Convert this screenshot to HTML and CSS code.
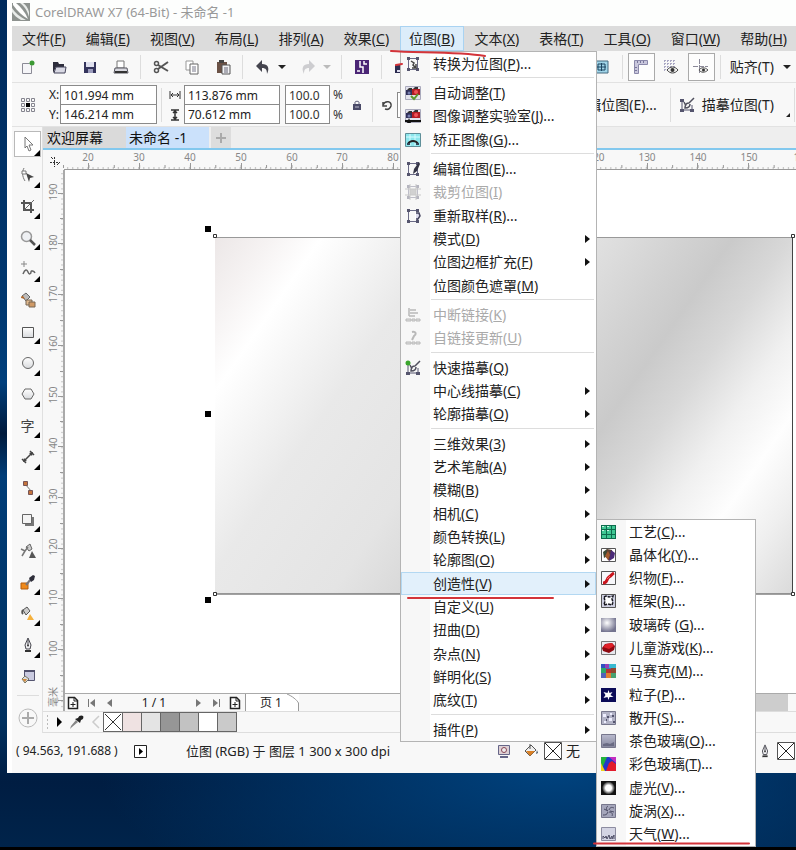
FILE: index.html
```html
<!DOCTYPE html>
<html lang="zh-CN">
<head>
<meta charset="utf-8">
<title>CorelDRAW X7 (64-Bit) - 未命名 -1</title>
<link rel="stylesheet" href="styles.css">
</head>
<body>
<svg class="defs" width="0" height="0" aria-hidden="true">
  <defs>
    <symbol id="nodes" viewBox="0 0 16 16"><path d="M4 2.500h8M4 13.500h8M3.500 4v8M12.500 4v8" stroke="#6a6a86" stroke-width="1" fill="none"/><path d="M2 1h3v3H2zM11 1h3v3h-3zM2 12h3v3H2zM11 12h3v3h-3z" fill="#55556e"/></symbol>
    <symbol id="trace" viewBox="0 0 16 16"><path d="M3 4v9M13 8v5M4 13h8" stroke="#55556e" fill="none"/><path d="M1 2h4v3H1zM1 12h4v3H1zM11 12h4v3h-4z" fill="#55556e"/><path d="M15 1l-5 5M10 6c-3 0-4 2-4 5 3 0 5-1 5-4M5 5l2 4" stroke="#50505e" stroke-width="1.500" fill="none"/></symbol>
    <symbol id="cross" viewBox="0 0 18 18"><path d="M.5.5h17v17H.5z" fill="#fff" stroke="#555"/><path d="M1 1l16 16M17 1L1 17" stroke="#222"/></symbol>
    <symbol id="pen" viewBox="0 0 16 16"><path d="M8 1L5 8l1 4h4l1-4z" fill="#f2f2f5" stroke="#44444c"/><path d="M8 3v5" stroke="#44444c"/><circle cx="8" cy="8.500" r="1" fill="#333"/><path d="M5 13h6v2H5z" fill="#333"/></symbol>
    <symbol id="newpage" viewBox="0 0 12 14"><path d="M1.500 1.500h6l3 3v8h-9z" fill="#fff" stroke="#222" stroke-width="1.500"/><path d="M7 1v4h4M6 6v5M3.500 8.500h5" stroke="#222" fill="none"/></symbol>
    <symbol id="camera" viewBox="0 0 16 16"><path d="M.5 1.500h15v13H.5z" fill="#e2e2ec" stroke="#aaaabc"/><path d="M1 5h6v5H1z" fill="#30305a"/><path d="M7 4h8v6H7z" fill="#b01c24"/><path d="M2 5l2-2h3v2zM8 4l2-2h3v2z" fill="#333"/><circle cx="4" cy="8" r="1.500" fill="#7880b0"/><circle cx="11" cy="7" r="2" fill="#f05058"/></symbol>
    <linearGradient id="lav" x1="0" y1="0" x2="0" y2="1"><stop offset="0" stop-color="#b9bace"/><stop offset="1" stop-color="#85869c"/></linearGradient>
    <radialGradient id="ball" cx=".4" cy=".35" r=".65"><stop offset="0" stop-color="#fff"/><stop offset="1" stop-color="#74748f"/></radialGradient>
    <radialGradient id="vig"><stop offset=".45" stop-color="#fff"/><stop offset="1" stop-color="#111"/></radialGradient>
    <linearGradient id="soft" x1="0" y1="0" x2="0" y2="1"><stop offset="0" stop-color="#fff"/><stop offset="1" stop-color="#d8dadd"/></linearGradient>
  </defs>
</svg>

<main class="window">
  <header class="titlebar">
    <svg width="18" height="18" viewBox="0 0 18 18"><path d="M0 0h18v18H0z" fill="#8d928f"/><path d="M1 0h3c5 4 9 9 12 16C11 13 5 8 1 2z" fill="#fff"/><path d="M0 5c3 5 8 9 14 12H9C5 15 2 12 0 9zM8 0c4 3 7 7 9 14V9C16 5 14 2 11 0z" fill="#e9ecea"/></svg>
    <h1>CorelDRAW X7 (64-Bit) - 未命名 -1</h1>
  </header>

  <nav class="menubar">
    <button>文件(<u>F</u>)</button>
    <button>编辑(<u>E</u>)</button>
    <button>视图(<u>V</u>)</button>
    <button>布局(<u>L</u>)</button>
    <button>排列(<u>A</u>)</button>
    <button>效果(<u>C</u>)</button>
    <div class="menu-host">
      <button class="open">位图(<u>B</u>)</button>
      <div class="menu">
        <button><i><svg><use href="#nodes"/><path d="M6 5l3 2-1 2 3 3M11 8v4H7" stroke="#444" stroke-width="1.500" fill="none"/></svg></i>转换为位图(<u>P</u>)...</button>
        <hr>
        <button><i><svg><use href="#camera"/><path d="M6 11l3 3 4-5" stroke="#5c9a2c" stroke-width="2" fill="none"/></svg></i>自动调整(<u>T</u>)</button>
        <button><i><svg><use href="#camera"/><path d="M0 13h16" stroke="#111" stroke-width="2"/><path d="M4 10l2 5H2z" fill="#111"/></svg></i>图像调整实验室(<u>J</u>)...</button>
        <button><i><svg><path d="M.5 1.500h15v13H.5z" fill="#8be6ec" stroke="#5f8f99"/><path d="M1 5h14M5 2v12M10 2v12" stroke="#d5fbff"/><path d="M3 12c2-4 8-4 10 0" stroke="#222" stroke-width="2" fill="none"/><path d="M2 11h3v2H2zM11 11h3v2h-3z" fill="#345"/></svg></i>矫正图像(<u>G</u>)...</button>
        <hr>
        <button><i><svg><use href="#nodes"/><path d="M14 1L9 8l-1 5 4-3 3-7z" fill="#333344"/></svg></i>编辑位图(<u>E</u>)...</button>
        <button disabled><i><svg opacity=".4"><path d="M5 5h6v6H5z" fill="#999"/><use href="#nodes"/><path d="M0 5h16M0 11h16M5 0v16M11 0v16" stroke="#888"/></svg></i>裁剪位图(<u>I</u>)</button>
        <button><i><svg><use href="#nodes"/><path d="M10 4h4v7h-4z" fill="#fff"/><path d="M11 5h3l1 3-2 3h-2" fill="#dde" stroke="#44445e" stroke-width="1.500"/></svg></i>重新取样(<u>R</u>)...</button>
        <button class="more"><i></i>模式(<u>D</u>)</button>
        <button class="more"><i></i>位图边框扩充(<u>F</u>)</button>
        <button><i></i>位图颜色遮罩(<u>M</u>)</button>
        <hr>
        <button disabled><i><svg opacity=".55"><path d="M4 1v8M5 3h6M5 6h8M4 9h6" stroke="#888" stroke-width="1.500"/><path d="M1 12h5v2H1zM7 12h3v2H7zM11 12h4v2h-4z" fill="#ccc" stroke="#888"/></svg></i>中断链接(<u>K</u>)</button>
        <button disabled><i><svg opacity=".55"><path d="M7 2c5-1 4 3 2 4l-2 4" stroke="#888" stroke-width="2" fill="none"/><path d="M1 12h5v2H1zM7 12h3v2H7zM11 12h4v2h-4z" fill="#ccc" stroke="#888"/></svg></i>自链接更新(<u>U</u>)</button>
        <hr>
        <button><i><svg><use href="#trace"/><circle cx="3" cy="3" r="2.500" fill="#3aa52c"/></svg></i>快速描摹(<u>Q</u>)</button>
        <button class="more"><i></i>中心线描摹(<u>C</u>)</button>
        <button class="more"><i></i>轮廓描摹(<u>O</u>)</button>
        <hr>
        <button class="more"><i></i>三维效果(<u>3</u>)</button>
        <button class="more"><i></i>艺术笔触(<u>A</u>)</button>
        <button class="more"><i></i>模糊(<u>B</u>)</button>
        <button class="more"><i></i>相机(<u>C</u>)</button>
        <button class="more"><i></i>颜色转换(<u>L</u>)</button>
        <button class="more"><i></i>轮廓图(<u>O</u>)</button>
        <div class="sub-host">
          <button class="more current"><i></i>创造性(<u>V</u>)</button>
          <div class="menu submenu">
            <button><i><svg><path d="M0 1h15v14H0z" fill="#0d6b4d"/><path d="M1 2h4v3H1zM6 2h4v3H6zM11 2h3v3h-3zM1 6h4v4H1zM6 6h4v4H6zM11 6h3v4h-3zM1 11h4v3H1zM6 11h4v3H6zM11 11h3v3h-3z" fill="#3fc793"/><path d="M1 2h2v1H1zM6 2h2v1H6zM1 6h2v1H1zM6 6h2v1H6z" fill="#c9f5e2"/></svg></i>工艺(<u>C</u>)...</button>
            <button><i><svg><path d="M.5 1.500h14v13H.5z" fill="#fff" stroke="#555"/><path d="M2 5l4-3 2 6-5 3z" fill="#3b4a35"/><path d="M6 2l5 1 1 5-4 6-3-4z" fill="#5c4030"/><path d="M10 3l4 3-1 5-5 3z" fill="#4a2a78"/><path d="M4 9l3-5 2 4-2 5z" fill="#a35a2e"/></svg></i>晶体化(<u>Y</u>)...</button>
            <button><i><svg><path d="M.5 1.500h14v13H.5z" fill="#f7f7fa" stroke="#555"/><path d="M2 13c5 0 3-4 6-6s3-3 5-4" stroke="#c9151d" stroke-width="3" fill="none"/><path d="M6 9l3-3" stroke="#ff6a6a"/></svg></i>织物(<u>F</u>)...</button>
            <button><i><svg><path d="M.5 1.500h14v13H.5z" fill="#cfd0e2" stroke="#555"/><path d="M4 4h7v8H4z" fill="#fff"/><path d="M3 4l2-1 3 1 4-1-1 3 1 3-1 3-4-1-4 1 1-4z" stroke="#181820" stroke-width="1.500" stroke-dasharray="3 1" fill="none"/></svg></i>框架(<u>R</u>)...</button>
            <button><i><svg><path d="M0 1h15v14H0z" fill="url(#ball)"/></svg></i>玻璃砖 (<u>G</u>)...</button>
            <button><i><svg><path d="M.5 1.500h14v13H.5z" fill="#e8e8ee" stroke="#777"/><path d="M1 8l3-4 7-1 3 3-1 4-5 3-6-2z" fill="#8e0910"/><path d="M2 7l3-3 6-1 2 3-5 3z" fill="#e02028"/></svg></i>儿童游戏(<u>K</u>)...</button>
            <button><i><svg><path d="M0 1h15v14H0z" fill="#5262b8"/><path d="M0 1h4v4H0z" fill="#3050c0"/><path d="M4 1h4v4H4z" fill="#9240b8"/><path d="M8 1h7v4H8z" fill="#38b9d0"/><path d="M0 5h5v5H0z" fill="#2ca86a"/><path d="M5 6h5v4H5z" fill="#b73230"/><path d="M10 5h5v5h-5z" fill="#93452e"/><path d="M5 10h5v5H5z" fill="#e28030"/><path d="M10 10h5v5h-5z" fill="#48a070"/></svg></i>马赛克(<u>M</u>)...</button>
            <button><i><svg><path d="M0 1h15v14H0z" fill="#0b0b57"/><path d="M7.500 3l1 3 3-1-2 3 3 2-4 0-1 3-1-3-4 1 2-3-2-3 4 1z" fill="#fff"/></svg></i>粒子(<u>P</u>)...</button>
            <button><i><svg><path d="M.5 1.500h14v13H.5z" fill="#b2b3c6" stroke="#77778c"/><path d="M2 4h3v3H2zM8 8h3v3H8zM3 11h2v2H3zM9 3h2v2H9z" fill="#eef"/><path d="M6 6h2v2H6zM11 5h2v2h-2zM5 9h1v2H5zM12 11h2v2h-2z" fill="#555570"/></svg></i>散开(<u>S</u>)...</button>
            <button><i><svg><path d="M.5 1.500h14v13H.5z" fill="url(#lav)" stroke="#77778c"/><path d="M2 11l4-1 3 1 4-2v4H2z" fill="#696a82"/></svg></i>茶色玻璃(<u>O</u>)...</button>
            <button><i><svg><path d="M0 1h15v14H0z" fill="#2438c8"/><path d="M0 1h6l-3 7-3 7z" fill="#23b33c"/><path d="M0 7l4 8H0z" fill="#f2d21a"/><path d="M8 1h7v6z" fill="#c32cc0"/><path d="M5 15l3-8 3-2 4 3v7z" fill="#e21b2c"/></svg></i>彩色玻璃(<u>T</u>)...</button>
            <button><i><svg><path d="M0 1h15v14H0z" fill="#111"/><circle cx="7.500" cy="8" r="6.500" fill="url(#vig)"/></svg></i>虚光(<u>V</u>)...</button>
            <button><i><svg><path d="M.5 1.500h14v13H.5z" fill="#a5a6bb" stroke="#77778c"/><path d="M7 8C5 7 5 4 7 3M8 7c1-3 3-3 5-2M8 9c3 0 4 2 3 4M7 9c-1 3-3 3-5 3M7 8L3 6M9 8l4 1" stroke="#4c4c64" fill="none"/></svg></i>旋涡(<u>X</u>)...</button>
            <button><i><svg><path d="M.5 1.500h14v13H.5z" fill="#d3d4e3" stroke="#8c8ca0"/><path d="M2 13v-3l2 2 1-2 1 3 2-4 1 4 2-3v3l2-4v4" stroke="#4c4c64" fill="none"/></svg></i>天气(<u>W</u>)...</button>
          </div>
        </div>
        <button class="more"><i></i>自定义(<u>U</u>)</button>
        <button class="more"><i></i>扭曲(<u>D</u>)</button>
        <button class="more"><i></i>杂点(<u>N</u>)</button>
        <button class="more"><i></i>鲜明化(<u>S</u>)</button>
        <button class="more"><i></i>底纹(<u>T</u>)</button>
        <hr>
        <button class="more"><i></i>插件(<u>P</u>)</button>
      </div>
    </div>
    <button>文本(<u>X</u>)</button>
    <button>表格(<u>T</u>)</button>
    <button>工具(<u>O</u>)</button>
    <button>窗口(<u>W</u>)</button>
    <button>帮助(<u>H</u>)</button>
  </nav>

  <section class="toolbar" aria-label="标准工具栏">
    <button class="tb" aria-label="新建"><svg><path d="M2.500 4.500h7l2 2v8h-9z" fill="#f5f5f8" stroke="#8b8b96"/><circle cx="12" cy="4" r="2.500" fill="#3c9a34"/></svg></button>
    <button class="tb" aria-label="打开"><svg><path d="M2 3h5l1 2h5v3H5l-3 6z" fill="#2e2e3c"/><path d="M5 8h10l-1 6H3z" fill="#d9d9e4" stroke="#44445a"/></svg></button>
    <button class="tb" aria-label="保存"><svg><path d="M2 3h12v11H2z" fill="#34345c"/><path d="M4 3h8v5H4z" fill="#dfe0ee"/><path d="M6 10h5v4H6z" fill="#9c9dbd"/></svg></button>
    <button class="tb" aria-label="打印"><svg><path d="M4 2h7v7H4z" fill="#fff" stroke="#777"/><path d="M2 9h12l1 5H1z" fill="#d8d8df" stroke="#55555f"/><path d="M2 13h12" stroke="#333" stroke-width="2"/></svg></button>
    <span class="split"></span>
    <button class="tb" aria-label="剪切"><svg><path d="M5 6l10 6M5 10l10-7" stroke="#555" stroke-width="2"/><circle cx="3.500" cy="4.500" r="2" fill="none" stroke="#555" stroke-width="1.500"/><circle cx="3.500" cy="11.500" r="2" fill="none" stroke="#555" stroke-width="1.500"/></svg></button>
    <button class="tb" aria-label="复制"><svg><path d="M2 2h7v9H2z" fill="#fff" stroke="#999"/><path d="M6 5h8v10H6z" fill="#fff" stroke="#666"/><path d="M8 8h4M8 10h4M8 12h4" stroke="#778"/></svg></button>
    <button class="tb" aria-label="粘贴"><svg><path d="M2 3h10v11H2z" fill="#6b5246"/><path d="M4 1h5v3H4z" fill="#444"/><path d="M7 6h8v9H7z" fill="#f2f2f5" stroke="#555"/><path d="M9 9h4M9 11h4M9 13h4" stroke="#667"/></svg></button>
    <span class="split"></span>
    <button class="tb" aria-label="撤消"><svg><path d="M1 7l6-6v4c6 0 8 4 5 10 0-4-1-6-5-6v4z" fill="#44444e"/></svg></button>
    <span class="drop"></span>
    <button class="tb" aria-label="重做" disabled><svg><path d="M15 7L9 1v4C3 5 1 9 4 15c0-4 1-6 5-6v4z" fill="#cdcdd0"/></svg></button>
    <span class="drop pale"></span>
    <span class="split"></span>
    <button class="tb" aria-label="搜索内容"><svg><path d="M1 1h14v14H1z" fill="#4b2676"/><path d="M6 2v6h3v6M10 2v3h3M6 12H3" stroke="#fff" stroke-width="1.500" fill="none"/></svg></button>
    <span class="split"></span>
    <button class="tb import" aria-label="导入"><svg><path d="M1 6h10v8H1z" fill="#2c2c50"/><path d="M3 11h7v2H3z" fill="#dde"/></svg></button>
    <span class="grow"></span>
    <button class="tb" aria-label="全屏预览"><svg><path d="M1 2h13v12H1z" fill="#9fd4e8" stroke="#456a80"/><path d="M4 5h7v6H4zM3 8h9M7.500 4v8" stroke="#1d4560" fill="none"/></svg></button>
    <span class="split"></span>
    <button class="tb framed" aria-label="显示标尺"><svg><path d="M1.500 1.500h13v4h-9v9h-4z" fill="#c9c7dd" stroke="#8a88aa"/><path d="M4.500 2v2M7.500 2v2M10.500 2v2M2 8.500h2M2 11.500h2" stroke="#777599"/></svg></button>
    <button class="tb" aria-label="显示网格"><svg><path d="M1 1.500h12M1 4.500h12M1 7.500h12M1 10.500h4M1.500 1v12M4.500 1v12M7.500 1v7M10.500 1v7" stroke="#aaa8c4" stroke-dasharray="2 1" fill="none"/><path d="M4 11c3-4 8-4 11 0-3 4-8 4-11 0z" fill="#eee" stroke="#444"/><circle cx="9.500" cy="11" r="2" fill="#333"/></svg></button>
    <button class="tb framed" aria-label="显示辅助线"><svg><path d="M0 7.500h15M6.500 0v14" stroke="#8a8898" stroke-dasharray="5 1"/><path d="M6 11c2-3 6-3 9 0-3 3-7 3-9 0z" fill="#eee" stroke="#555"/><circle cx="10.500" cy="11" r="1.500" fill="#333"/></svg></button>
    <span class="split"></span>
    <button class="snap">贴齐(T)<span class="drop"></span></button>
  </section>

  <section class="props" aria-label="属性栏">
    <svg class="origin" width="16" height="16"><path d="M1.500 1.500h3v3h-3zM6.500 1.500h3v3h-3zM11.500 1.500h3v3h-3zM1.500 6.500h3v3h-3zM11.500 6.500h3v3h-3zM1.500 11.500h3v3h-3zM6.500 11.500h3v3h-3zM11.500 11.500h3v3h-3z" fill="none" stroke="#85858f"/><path d="M6 6h4v4H6z"/></svg>
    <div class="fields position">
      <label for="px">X:</label><input id="px" value="101.994 mm">
      <label for="py">Y:</label><input id="py" value="146.214 mm">
    </div>
    <span class="split"></span>
    <div class="fields size">
      <label for="pw" aria-label="宽度"><svg width="12" height="10"><path d="M1 1v8M11 1v8M2 5h8M4 3L2 5l2 2M8 3l2 2-2 2" stroke="#333" fill="none"/></svg></label><input id="pw" value="113.876 mm">
      <label for="ph" aria-label="高度"><svg width="10" height="12"><path d="M1 1h8M1 11h8M5 2v8M3 4l2-2 2 2M3 8l2 2 2-2" stroke="#333" fill="none" stroke-width="1.500"/></svg></label><input id="ph" value="70.612 mm">
    </div>
    <div class="fields percent">
      <input id="sx" value="100.0"><label for="sx">%</label>
      <input id="sy" value="100.0"><label for="sy">%</label>
    </div>
    <svg class="lock" width="10" height="12"><path d="M3 6V3c0-1 4-1 4 0v3" fill="none" stroke="#666680"/><path d="M1 5h8v6H1z" fill="#4a4a68"/><path d="M3 8h4" stroke="#bbc"/></svg>
    <span class="split"></span>
    <div class="fields angle">
      <label for="rot" aria-label="旋转角度"><svg width="12" height="12"><path d="M2 3v4h4M2 6c2-5 9-4 8 1-1 3-3 4-6 3" fill="none" stroke="#444" stroke-width="1.500"/></svg></label>
      <input id="rot" value=".0">
    </div>
    <span class="grow"></span>
    <button class="prop-btn">编辑位图(E)...</button>
    <span class="split"></span>
    <button class="prop-btn"><svg width="16" height="16"><use href="#trace"/></svg>描摹位图(T)</button>
    <span class="corner"></span>
    <span class="split"></span>
  </section>

  <div class="workspace">
    <aside class="toolbox" aria-label="工具箱">
      <button class="tool fly picked" aria-label="选择"><svg><path d="M5 1l8 8-4 0 2 5-2 1-2-5-2 2z" fill="#fff" stroke="#777"/></svg></button>
      <button class="tool fly" aria-label="形状"><svg><path d="M4 1c-2 4-2 8 1 13" stroke="#777" fill="none"/><path d="M2 4h4v3H2z" fill="#fff" stroke="#777"/><path d="M6 6l8 4-4 1-1 4z" fill="#444"/></svg></button>
      <button class="tool fly" aria-label="裁剪"><svg><path d="M4 2v10h10M1 5h10v10" stroke="#555" stroke-width="2" fill="none"/><path d="M4 12L14 2" stroke="#666"/></svg></button>
      <button class="tool fly" aria-label="缩放"><svg><circle cx="6.500" cy="6.500" r="5" fill="#eef0f3" stroke="#999" stroke-width="1.500"/><path d="M10 10l5 5" stroke="#555" stroke-width="2.500"/></svg></button>
      <button class="tool fly" aria-label="手绘"><svg><path d="M4 0v6M1 3h6" stroke="#888"/><path d="M3 13c2-5 4-5 5-2s3 2 3 0 3-1 4 1" stroke="#666" fill="none" stroke-width="1.500"/></svg></button>
      <button class="tool" aria-label="智能填充"><svg><path d="M2 4l4-3 4 4-4 4z" fill="#bbb" stroke="#666"/><path d="M1 6c0-2 1-2 2-2l2 3z" fill="#b0682c"/><path d="M6 8h6v5H6z" fill="#e0b98e" stroke="#765"/><path d="M9 10h6v5H9z" fill="#d09a66" stroke="#765"/></svg></button>
      <button class="tool fly" aria-label="矩形"><svg><path d="M2.500 3.500h11v10h-11z" fill="url(#soft)" stroke="#555"/></svg></button>
      <button class="tool fly" aria-label="椭圆形"><svg><circle cx="8" cy="8" r="5.500" fill="url(#soft)" stroke="#666"/></svg></button>
      <button class="tool fly" aria-label="多边形"><svg><path d="M5 3h6l3 5-3 5H5L2 8z" fill="url(#soft)" stroke="#666"/></svg></button>
      <button class="tool fly" aria-label="文本"><span class="glyph">字</span></button>
      <button class="tool fly" aria-label="平行度量"><svg><path d="M4 12l8-8M2 10l4 4M10 2l4 4" stroke="#444" stroke-width="1.500"/><path d="M3 13l1-4 3 3zM13 3L9 4l3 3z" fill="#444"/></svg></button>
      <button class="tool fly" aria-label="连接器"><svg><path d="M5 4l7 8" stroke="#777"/><path d="M3.500 1.500h4v4h-4zM8.500 10.500h4v4h-4z" fill="#c4733c" stroke="#755"/></svg></button>
      <button class="tool fly" aria-label="阴影"><svg><path d="M5 5h9v9H5z" fill="#777"/><path d="M2.500 2.500h9v9h-9z" fill="#f4f4f4" stroke="#666"/></svg></button>
      <button class="tool" aria-label="透明度"><svg><path d="M6 4l4-3 2 5-3 2z" fill="#ccc" stroke="#666"/><path d="M1 6l4 2 3-4M5 8l-3 5" stroke="#777" fill="none" stroke-width="1.500"/><path d="M12 8l4 7H9z" fill="#555"/></svg></button>
      <button class="tool fly" aria-label="颜色滴管"><svg><path d="M1 9h7v6H1z" fill="#f08a1c" stroke="#b05c10"/><path d="M6 11l5-6" stroke="#77777f" stroke-width="2"/><path d="M9 4l4-3 2 1-1 4-3 2z" fill="#2e2e3a"/></svg></button>
      <button class="tool fly" aria-label="交互式填充"><svg><path d="M3 4l4-3 3 4-4 4z" fill="#ccc" stroke="#555"/><path d="M3 4c-1 1-1 3 0 4" stroke="#555" stroke-width="2"/><path d="M10 8l4 6H7z" fill="#f5b13d"/></svg></button>
      <button class="tool fly" aria-label="轮廓笔"><svg><use href="#pen"/></svg></button>
      <button class="tool" aria-label="编辑填充"><svg><path d="M4.500 2.500h10v10h-10z" fill="#c9cae0" stroke="#555570"/><path d="M4 2h11v2H4z" fill="#50506c"/><path d="M2 11l3-3 4 3-4 4z" fill="#ddd" stroke="#776"/><path d="M2 11h5l-2 3z" fill="#d08a3c"/></svg></button>
      <button class="add-tool" aria-label="快速自定义"><svg width="20" height="20"><circle cx="10" cy="10" r="9" fill="none" stroke="#bbb"/><path d="M10 4v12M4 10h12" stroke="#aaa" stroke-width="2"/></svg></button>
    </aside>

    <div class="document">
      <div class="tabs">
        <button class="tab">欢迎屏幕</button>
        <button class="tab active">未命名 -1</button>
        <button class="tab plus" aria-label="新建文档"><svg width="12" height="12"><path d="M6 1v10M1 6h10" stroke="#aaa" stroke-width="2"/></svg></button>
      </div>
      <svg class="hruler">
        <g transform="translate(-43 -150)">
          <path d="M64 169.500h900" stroke="#999"/>
          <path d="M67 168h731" pathLength="144" stroke="#999" stroke-width="1" stroke-dasharray=".25 .75"/>
          <path d="M63 166.500h736" pathLength="29" stroke="#999" stroke-width="3" stroke-dasharray=".04 .96"/>
          <path d="M88.500 163v6M139.500 163v6M190.500 163v6M241.500 163v6M291.500 163v6M342.500 163v6M393.500 163v6M596.500 163v6M647.500 163v6M697.500 163v6M748.500 163v6" stroke="#999"/>
          <text x="88" y="161">20</text><text x="139" y="161">30</text><text x="190" y="161">40</text><text x="241" y="161">50</text><text x="292" y="161">60</text><text x="342" y="161">70</text><text x="393" y="161">80</text><text x="596" y="161">120</text><text x="647" y="161">130</text><text x="698" y="161">140</text><text x="749" y="161">150</text><text x="802" y="161">160</text>
          <path d="M54.500 157v10M50 162.500h10" stroke="#333" stroke-dasharray="2 1"/><path d="M57 165l3-3M51 157l2 2" stroke="#333"/>
        </g>
      </svg>
      <svg class="vruler">
        <g transform="translate(-43 -170)">
          <path d="M64 170v541" stroke="#aaa" stroke-width="2"/>
          <path d="M62 173v538" pathLength="106" stroke="#aaa" stroke-width="1" stroke-dasharray=".25 .75"/>
          <path d="M58 193.500h5M58 243.500h5M58 294.500h5M58 345.500h5M58 396.500h5M58 446.500h5M58 497.500h5M58 548.500h5M58 598.500h5M58 649.500h5M58 700.500h5M60 218.500h3M60 269.500h3M60 320.500h3M60 371.500h3M60 421.500h3M60 472.500h3M60 523.500h3M60 573.500h3M60 624.500h3M60 675.500h3" stroke="#999"/>
          <text transform="translate(57 192) rotate(-90)">190</text><text transform="translate(57 243) rotate(-90)">180</text><text transform="translate(57 294) rotate(-90)">170</text><text transform="translate(57 344) rotate(-90)">160</text><text transform="translate(57 395) rotate(-90)">150</text><text transform="translate(57 446) rotate(-90)">140</text><text transform="translate(57 497) rotate(-90)">130</text><text transform="translate(57 547) rotate(-90)">120</text><text transform="translate(57 598) rotate(-90)">110</text><text transform="translate(57 649) rotate(-90)">100</text><text transform="translate(57 697) rotate(-90)">毫米</text>
        </g>
      </svg>
      <svg class="canvas">
        <defs>
          <linearGradient id="metal" gradientUnits="userSpaceOnUse" x1="215" y1="237" x2="773" y2="622">
            <stop offset="0" stop-color="#ece7e7"/><stop offset=".07" stop-color="#f6f3f3"/><stop offset=".13" stop-color="#fff"/><stop offset=".19" stop-color="#f6f6f6"/><stop offset=".28" stop-color="#e9e9e9"/><stop offset=".44" stop-color="#e4e4e4"/><stop offset=".5" stop-color="#dcdcdc"/><stop offset=".57" stop-color="#d2d2d2"/><stop offset=".63" stop-color="#cacaca"/><stop offset=".7" stop-color="#d8d8d8"/><stop offset=".78" stop-color="#f0f0f0"/><stop offset=".85" stop-color="#fefefe"/><stop offset=".92" stop-color="#efefef"/><stop offset="1" stop-color="#dadada"/>
          </linearGradient>
        </defs>
        <g transform="translate(-65 -170)">
          <path d="M215 237h578v357H215z" fill="url(#metal)"/>
          <path d="M215 237.500h578" stroke="#999"/>
          <path d="M215 594h578M792.500 237v357" stroke="#444"/>
          <path d="M205 226h6v6h-6zM205 411h6v6h-6zM205 597h6v6h-6z"/>
          <path d="M213.500 234.500h3v3h-3zM213.500 592.500h3v3h-3zM791.500 234.500h3v3h-3zM791.500 592.500h3v3h-3z" fill="#fff" stroke="#333"/>
        </g>
      </svg>
      <div class="pages">
        <svg width="12" height="14"><use href="#newpage"/></svg>
        <svg width="10" height="10"><path d="M1 1v8h1V1zM8 1v8L3 5z" fill="#777"/></svg>
        <svg width="10" height="10"><path d="M7 1v8L2 5z" fill="#777"/></svg>
        <span class="count">1 / 1</span>
        <svg width="10" height="10"><path d="M3 1v8l5-4z" fill="#777"/></svg>
        <svg width="10" height="10"><path d="M2 1v8l5-4zM8 1v8h1V1z" fill="#777"/></svg>
        <svg width="12" height="14"><use href="#newpage"/></svg>
        <div class="page-tab">页 1<svg width="12" height="18"><path d="M0 0c5 2 10 6 11.500 9v9" fill="none" stroke="#999"/></svg></div>
        <span class="scroll"></span>
      </div>
      <div class="palette">
        <svg width="46" height="16"><path d="M4.500 1v14" stroke="#bbb" stroke-dasharray="2 2"/><path d="M14 3v10l5-5z"/><path d="M27 15l1-3 5-6 2 2-6 5z" fill="#888"/><path d="M32 5l3-1c1-3 4-3 5-2s0 4-2 4l-1 3z" fill="#222"/></svg>
        <svg width="14" height="14"><path d="M10 1L4 7l6 6" stroke="#ccc" stroke-width="1.500" fill="none"/></svg>
        <ul class="swatches">
          <li><svg width="18" height="18"><path d="M1 1l16 16M17 1L1 17" stroke="#333"/></svg></li><li class="s1"></li><li class="s2"></li><li class="s3"></li><li class="s4"></li><li></li><li class="s5"></li>
        </ul>
      </div>
    </div>
  </div>

  <footer class="status">
    <span class="coords">( 94.563, 191.688 )</span>
    <svg width="13" height="13"><path d="M.5.5h12v12H.5z" fill="#fff" stroke="#222"/><path d="M5 3v7l4-3.500z"/></svg>
    <span class="info">位图 (RGB) 于 图层 1 300 x 300 dpi</span>
    <svg class="proof" width="14" height="14"><path d="M1.500 1.500h11v9h-11z" fill="#ddd0d4" stroke="#668"/><circle cx="7" cy="6" r="2.500" fill="#eee" stroke="#845"/><path d="M3 13h8" stroke="#668" stroke-width="2"/></svg>
    <svg class="bucket" width="16" height="16"><path d="M2 8l6-6 5 5-6 6z" fill="#eee" stroke="#555"/><path d="M3 8h9l-5 5z" fill="#d98026"/><path d="M7 1v5" stroke="#555"/><path d="M14 7l1 3-2 1z" fill="#456"/></svg>
    <svg width="18" height="18"><use href="#cross"/></svg>
    <span class="none">无</span>
    <span class="grow"></span>
    <svg width="14" height="16"><use href="#pen"/></svg>
    <svg class="outline" width="18" height="18"><use href="#cross"/></svg>
  </footer>
</main>

<svg class="marks" aria-hidden="true"><path d="M391 51c25 2 66 0 94 5M396 65l6-1M408 598l145 0M594 843.500l155 0" fill="none" stroke="#d3343a" stroke-width="2" stroke-linecap="round"/></svg>
</body>
</html>
```
FILE: styles.css
```css
* { box-sizing: border-box; }

body {
  margin: 0;
  min-height: 100vh;
  position: relative;
  overflow: hidden;
  padding-left: 7px;
  border-bottom: 3px solid #000;
  background:
    radial-gradient(ellipse 460px 160px at 560px 770px, #00437f, transparent),
    linear-gradient(#002a5c 0, #00376f 35%, #003f7c 45%, #001a3c 51%, #003d78 56%, #00305f 85%, #001d42 92%, #00244b);
  font: 14px/20px "Noto Sans", "Noto Sans CJK SC", sans-serif;
  color: #222;
}

button, input { font: inherit; color: inherit; }
button { border: 0; padding: 0; background: none; white-space: nowrap; }
u { text-underline-offset: 1px; text-decoration-thickness: 1px; }
svg { flex: none; }
.defs { position: absolute; }
.grow { flex: 1; }

.window { background: #f8f8f8; border-left: 5px solid #fff; }

.titlebar {
  display: flex;
  align-items: center;
  gap: 5px;
  height: 26px;
  padding-bottom: 2px;
  background: #fdfefd;
}
.titlebar h1 { margin: 0; font-size: 13px; font-weight: 400; color: #999; }

/* menu bar */
.menubar { display: flex; height: 25px; background: #dcdcdc; }
.menubar > button, .menu-host > button { height: 25px; padding: 0 10px; flex: none; }
.menu-host { position: relative; }
.menu-host > .open { background: #dcedfa; border: 1px solid #a9d3f2; margin: 0 1px; padding: 0 8px; }

.menu {
  position: absolute;
  z-index: 5;
  top: 100%;
  left: 1px;
  width: 197px;
  min-height: 691px;
  display: flex;
  flex-direction: column;
  border: 1px solid #b4b4b4;
  background: linear-gradient(90deg, #f7f7f7 29px, #fff 29px);
}
.menu button {
  flex: 1;
  display: flex;
  align-items: center;
  width: 100%;
  padding: 0;
  text-align: left;
  position: relative;
}
.menu i { flex: none; width: 32px; height: 16px; padding-left: 4px; }
.menu i svg { display: block; width: 16px; height: 16px; }
.menu hr { flex: none; width: 163px; height: 1px; margin: 2px 2px 3px auto; border: 0; background: #ddd; }
.menu button:disabled { color: #aaa; }
.more::after {
  content: "";
  margin-left: auto;
  margin-right: 6px;
  border: 4px solid transparent;
  border-left: 5px solid #111;
  border-right: 0;
}
.sub-host { flex: 1; display: flex; position: relative; }
.menu .current { background: #e2f0fb; box-shadow: inset 0 0 0 1px #b3d8f2; }
.menu .submenu {
  top: -53px;
  left: 195px;
  width: 160px;
  min-height: 328px;
}

/* toolbars */
.toolbar {
  display: flex;
  align-items: center;
  height: 32px;
  border-bottom: 1px solid #e2e2e2;
}
.tb { width: 31px; height: 28px; flex: none; display: grid; place-items: center; }
.tb svg, .tool svg { width: 16px; height: 16px; }
.framed { width: 27px; margin: 0 1px; border: 1px solid #aaa; background: #fdfdfd; }
.split { flex: none; width: 1px; height: 24px; margin: 0 4px; background: #ddd; }
.drop { flex: none; width: 8px; border: 4px solid transparent; border-top: 4px solid #222; border-bottom: 0; }
.pale { border-top-color: #bbb; }
.tb + .drop { margin-right: 6px; }
.snap { display: flex; align-items: center; gap: 9px; padding: 0 5px; }

.props {
  display: flex;
  align-items: center;
  height: 44px;
  border-bottom: 1px solid #e2e2e2;
}
.props .split { height: 34px; }
.origin { margin: 0 12px 0 8px; }
.fields { display: grid; align-items: center; font-size: 12px; line-height: 18px; }
.fields input {
  width: 100%;
  height: 20px;
  padding: 0 3px;
  border: 1px solid #8a8a8a;
  background: #fff;
}
.fields input:nth-of-type(2) { height: 19px; border-top: 0; }
.fields label { display: grid; justify-items: center; }
.position { grid-template-columns: 12px 97px; }
.size { grid-template-columns: 18px 96px; margin-right: 5px; }
.percent { grid-template-columns: 45px 16px; color: #333; }
.lock { margin: 0 6px; }
.angle { grid-template-columns: 20px 60px; }
.angle input { height: 26px; }
.prop-btn { display: flex; align-items: center; gap: 7px; }
.prop-btn + .split { margin: 0 8px 0 13px; }
.corner { align-self: flex-end; margin: 0 4px 9px 12px; border: 2px solid #222; border-top-color: transparent; border-left-color: transparent; }
.props .corner + .split { margin: 0 1px 0 0; }

/* workspace */
.workspace { display: grid; grid-template-columns: 31px minmax(0, 1fr); }
.toolbox { display: flex; flex-direction: column; padding: 1px 0 0 1px; border-right: 1px solid #e0e0e0; }
.tool { flex: 1; display: grid; place-items: center; position: relative; width: 29px; }
.picked svg { position: relative; }
.picked::before {
  content: "";
  position: absolute;
  inset: 3px 1px 2px;
  border: 1px solid #b9b9b9;
  background: #fff;
}
.fly::after {
  content: "";
  position: absolute;
  right: 2px;
  bottom: 3px;
  border: 3px solid #000;
  border-top-color: transparent;
  border-left-color: transparent;
}
.glyph { font-size: 14px; line-height: 16px; color: #444; }
.add-tool { height: 38px; margin: 3px 3px 0 4px; padding: 12px 0 0 0; border-top: 1px solid #ddd; display: grid; justify-items: center; }

.document {
  display: grid;
  grid-template: 23px 20px 523px 18px 22px / 22px minmax(0, 1fr);
}
.tabs { grid-column: 1 / -1; display: flex; background: #eee; border-bottom: 2px solid #82c8ee; }
.tab { padding: 0 4px; background: #dadada; color: #111; width: 83px; text-align: left; }
.tab.active { background: #cbe1fb; padding: 0 3px; }
.tab.plus { width: 20px; margin-left: 2px; display: grid; place-items: center; background: #ddd; }
.hruler { grid-column: 1 / -1; width: 100%; height: 20px; }
.vruler { grid-row: 3 / 5; width: 22px; height: 541px; }
.hruler text, .vruler text { font-size: 10px; fill: #888; text-anchor: middle; }
.canvas { width: 100%; height: 523px; background: #fff; }

.pages {
  display: flex;
  align-items: center;
  gap: 8px;
  padding-left: 2px;
  border-top: 1px solid #aaa;
  font-size: 12px;
  line-height: 17px;
}
.pages .count { width: 62px; text-align: center; }
.page-tab {
  display: flex;
  align-items: center;
  justify-content: space-between;
  width: 54px;
  height: 17px;
  padding-left: 14px;
  margin-left: -4px;
  border-left: 1px solid #999;
  background: #fff;
}
.scroll { width: 33px; height: 17px; margin: 0 8px 0 auto; background: #cdcdcd; }

.palette { grid-column: 1 / -1; display: flex; align-items: center; border-top: 1px solid #ddd; border-bottom: 1px solid #ddd; }
.swatches { display: flex; margin: 0; padding: 0 1px 0 0; list-style: none; background: #666; border: 1px solid #666; border-right: 0; gap: 1px; }
.swatches li { width: 18px; height: 18px; background: #fff; }
.swatches .s1 { background: #efe2e2; }
.swatches .s2 { background: #e4e4e4; }
.swatches .s3 { background: #969696; }
.swatches .s4 { background: #c2c2c2; }
.swatches .s5 { background: #cacaca; }

.status { display: flex; align-items: center; height: 40px; padding: 0 0 4px 4px; }
.coords { font-size: 12px; width: 118px; }
.info { margin-left: 39px; font-size: 13px; width: 311px; }
.bucket { margin: 0 5px 0 12px; }
.none { margin-left: 4px; }
.status .outline { margin: 0 1px 0 5px; }

.marks { position: absolute; z-index: 9; top: 0; left: 0; width: 100%; height: 100%; pointer-events: none; }
```
